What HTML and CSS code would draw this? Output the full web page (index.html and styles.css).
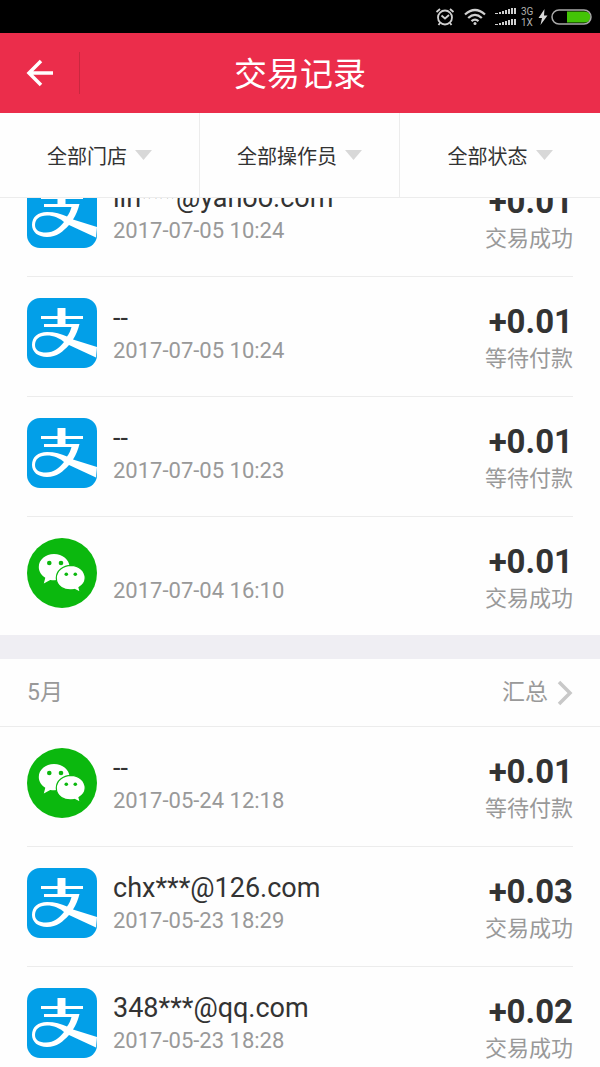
FILE: index.html
```
<!DOCTYPE html>
<html lang="zh-CN">
<head>
    <meta charset="UTF-8">
    <meta name="viewport" content="width=device-width, initial-scale=1.0">
    <title>交易记录</title>
    <link rel="stylesheet" href="styles.css">
</head>
<body>
    <!-- shared payment icons -->
    <svg class="sprite" aria-hidden="true">
        <symbol id="alipay" viewBox="0 0 70 70">
            <rect width="70" height="70" rx="13" fill="#029fe8"/>
            <path fill="#fff" d="M30.500 10H38.500V18H56V21H38.500V26H52.500C51 32 49 37 46 41.500L70 49L69 59.500L42 47C36 53.500 30 59 20 59C11 59 5 54 5 47C5 39 11 34 20 34C28 34 34 36 40 38.500C42 36 43.500 33 44.500 29H17V26H30.500V21H14V18H30.500Z"/>
            <path fill="#029fe8" d="M20 37.500C12 37.500 8 41.500 8 47C8 52 12 54.500 19 54.500C27 54.500 32 50 37 44C32 40 27 37.500 20 37.500Z"/>
        </symbol>
        <symbol id="wechat" viewBox="0 0 70 70">
            <circle cx="35" cy="35" r="35" fill="#0bb80e"/>
            <path fill="#fff" d="M27 16C18.500 16 11.800 21.600 11.800 29C11.800 33.500 14.500 37.300 18.300 39.700L16.800 45.500L23.200 42C35 44 42.500 37 42.500 29C42.500 21.600 35.500 16 27 16Z"/>
            <path fill="#fff" stroke="#0bb80e" stroke-width="1.200" d="M44 27.300C36 27.300 29.300 33 29.300 40C29.300 48 37 53.500 47.500 51.500L53.300 54.300L52 49.500C55.500 47.300 58.200 44 58.200 40C58.200 33 51.800 27.300 44 27.300Z"/>
            <g fill="#0bb80e">
                <circle cx="22.300" cy="25" r="2.300"/>
                <circle cx="34" cy="25" r="2.300"/>
                <circle cx="39.300" cy="36.300" r="1.800"/>
                <circle cx="48.300" cy="36.300" r="1.800"/>
            </g>
        </symbol>
    </svg>

    <div class="status-bar">
        <svg width="20" height="20" viewBox="0 0 20 20" fill="none" stroke="#d0d0d0" stroke-width="1.800">
            <circle cx="10" cy="10.500" r="7"/>
            <path d="M6.500 8.500L10 11.500L14 8M1.500 5L5 2M18.500 5L15 2M5 16L3.500 18M15 16L16.500 18"/>
        </svg>
        <svg class="wifi" width="22" height="18" viewBox="0 0 22 18" fill="none" stroke="#d0d0d0" stroke-width="2.300">
            <path d="M1 6.500Q11 -2.500 21 6.500M4.200 10Q11 3.800 17.800 10M7.500 13.200Q11 10 14.500 13.200"/>
            <circle cx="11" cy="15.500" r="1.500" fill="#d0d0d0" stroke="none"/>
        </svg>
        <svg class="signal" width="22" height="20" viewBox="0 0 22 20" fill="#d0d0d0">
            <path d="M0 6h3v1h-3zM4 5h2v2h-2zM7 4h2v3h-2zM10 3h2v4h-2zM13 2h2v5h-2zM16 1h2v6h-2zM19 1h2v6h-2z"/>
            <path d="M0 17h3v1h-3zM4 16h2v2h-2zM7 15h2v3h-2zM10 14h2v4h-2zM13 13h2v5h-2zM16 12h2v6h-2zM19 12h2v6h-2z"/>
        </svg>
        <div class="network">
            <span>3G</span>
            <span>1X</span>
        </div>
        <svg class="bolt" width="10" height="16" viewBox="0 0 10 16" fill="#d8d8d8">
            <path d="M6.500 0L0.500 9H4L2.500 16L9.500 6.500H6Z"/>
        </svg>
        <svg width="42" height="16" viewBox="0 0 42 16">
            <path fill="#43c406" d="M16 2.500H34a5.500 5.500 0 0 1 0 11H16Z"/>
            <rect x="1" y="1" width="39" height="14" rx="7" fill="none" stroke="#aaa" stroke-width="1.500"/>
        </svg>
    </div>

    <header class="header">
        <button class="back" type="button" aria-label="返回">
            <svg width="28" height="28" viewBox="0 0 28 28" fill="none" stroke="#fff" stroke-width="3.500">
                <path d="M15 2L3 14L15 26M3 14H27"/>
            </svg>
        </button>
        <h1 class="title">交易记录</h1>
    </header>

    <div class="filters">
        <label class="filter">
            <select aria-label="门店"><option>全部门店</option></select>
            <svg width="17" height="10" viewBox="0 0 17 10"><path d="M0 0H17L8.500 10Z" fill="#d8d8d8"/></svg>
        </label>
        <label class="filter">
            <select aria-label="操作员"><option>全部操作员</option></select>
            <svg width="17" height="10" viewBox="0 0 17 10"><path d="M0 0H17L8.500 10Z" fill="#d8d8d8"/></svg>
        </label>
        <label class="filter">
            <select aria-label="状态"><option>全部状态</option></select>
            <svg width="17" height="10" viewBox="0 0 17 10"><path d="M0 0H17L8.500 10Z" fill="#d8d8d8"/></svg>
        </label>
    </div>

    <main class="records">
        <ul class="list scrolled">
            <li class="record">
                <svg class="pay-icon"><use href="#alipay"/></svg>
                <div class="info">
                    <div class="account">lin***@yahoo.com</div>
                    <div class="time">2017-07-05 10:24</div>
                </div>
                <div class="result">
                    <div class="amount">+0.01</div>
                    <div class="state">交易成功</div>
                </div>
            </li>
            <li class="record">
                <svg class="pay-icon"><use href="#alipay"/></svg>
                <div class="info">
                    <div class="account">--</div>
                    <div class="time">2017-07-05 10:24</div>
                </div>
                <div class="result">
                    <div class="amount">+0.01</div>
                    <div class="state">等待付款</div>
                </div>
            </li>
            <li class="record">
                <svg class="pay-icon"><use href="#alipay"/></svg>
                <div class="info">
                    <div class="account">--</div>
                    <div class="time">2017-07-05 10:23</div>
                </div>
                <div class="result">
                    <div class="amount">+0.01</div>
                    <div class="state">等待付款</div>
                </div>
            </li>
            <li class="record">
                <svg class="pay-icon"><use href="#wechat"/></svg>
                <div class="info">
                    <div class="account"></div>
                    <div class="time">2017-07-04 16:10</div>
                </div>
                <div class="result">
                    <div class="amount">+0.01</div>
                    <div class="state">交易成功</div>
                </div>
            </li>
        </ul>

        <section class="month">
            <div class="month-header">
                <h2>5月</h2>
                <a href="#">汇总
                    <svg width="16" height="26" viewBox="0 0 16 26" fill="none" stroke="#c8c8c8" stroke-width="3.500">
                        <path d="M2 2L13 13L2 24"/>
                    </svg>
                </a>
            </div>
            <ul class="list">
                <li class="record">
                    <svg class="pay-icon"><use href="#wechat"/></svg>
                    <div class="info">
                        <div class="account">--</div>
                        <div class="time">2017-05-24 12:18</div>
                    </div>
                    <div class="result">
                        <div class="amount">+0.01</div>
                        <div class="state">等待付款</div>
                    </div>
                </li>
                <li class="record">
                    <svg class="pay-icon"><use href="#alipay"/></svg>
                    <div class="info">
                        <div class="account">chx***@126.com</div>
                        <div class="time">2017-05-23 18:29</div>
                    </div>
                    <div class="result">
                        <div class="amount">+0.03</div>
                        <div class="state">交易成功</div>
                    </div>
                </li>
                <li class="record">
                    <svg class="pay-icon"><use href="#alipay"/></svg>
                    <div class="info">
                        <div class="account">348***@qq.com</div>
                        <div class="time">2017-05-23 18:28</div>
                    </div>
                    <div class="result">
                        <div class="amount">+0.02</div>
                        <div class="state">交易成功</div>
                    </div>
                </li>
            </ul>
        </section>
    </main>
</body>
</html>
```
FILE: styles.css
```
* {
    box-sizing: border-box;
}

body {
    margin: 0;
    height: 100vh;
    display: flex;
    flex-direction: column;
    overflow: hidden;
    background: #fefefe;
    color: #333;
    font-family: Roboto, "Noto Sans CJK SC", sans-serif;
}

.sprite {
    display: none;
}

.status-bar {
    flex: none;
    height: 33px;
    padding-right: 7px;
    display: flex;
    align-items: center;
    justify-content: flex-end;
    background: #000;
}

.wifi {
    margin: 0 9px;
}

.network {
    width: 13px;
    margin: 0 4px;
    display: flex;
    flex-direction: column;
    color: #b0b0b0;
    font-size: 10px;
    line-height: 11px;
}

.bolt {
    margin-right: 3px;
}

.header {
    flex: none;
    height: 80px;
    display: grid;
    grid-template-columns: 80px 1fr 80px;
    align-items: center;
    background: #eb2d4b;
}

.back {
    height: 42px;
    padding: 0 0 0 26px;
    display: flex;
    align-items: center;
    border: 0;
    border-right: 1px solid #c9283f;
    background: none;
}

.title {
    margin: 0;
    padding-top: 4px;
    color: #fff;
    font-size: 33px;
    font-weight: 400;
    line-height: 40px;
    text-align: center;
}

.filters {
    flex: none;
    height: 85px;
    display: grid;
    grid-template-columns: repeat(3, 1fr);
    border-bottom: 1px solid #ececec;
}

.filter {
    display: flex;
    align-items: center;
    justify-content: center;
    gap: 8px;
    border-right: 1px solid #ececec;
}

.filter:last-child {
    border-right: 0;
}

.filter select {
    appearance: none;
    padding: 4px 0 0;
    border: 0;
    background: none;
    color: #333;
    font-family: inherit;
    font-size: 20px;
}

.records {
    flex: 1;
    min-height: 0;
    overflow: hidden;
}

.list {
    margin: 0;
    padding: 0 27px;
    list-style: none;
}

/* list is scrolled up under the filters */
.scrolled {
    margin-top: -41px;
}

.record {
    display: flex;
    padding: 21px 0 20px;
    border-bottom: 1px solid #ececec;
}

.record:last-child {
    padding-bottom: 19px;
    border-bottom: 0;
}

.pay-icon {
    flex: none;
    width: 70px;
    height: 70px;
    margin-right: 16px;
}

.info {
    flex: 1;
    min-width: 0;
    padding-top: 4px;
}

.account {
    height: 32px;
    font-size: 27px;
    line-height: 32px;
}

.time {
    color: #999;
    font-size: 22px;
    line-height: 34px;
}

.result {
    padding-top: 4px;
    text-align: right;
}

.amount {
    font-size: 33px;
    font-weight: 700;
    line-height: 40px;
}

.state {
    color: #999;
    font-size: 22px;
    line-height: 34px;
}

.month {
    border-top: 24px solid #efeef3;
}

.month-header {
    height: 68px;
    padding: 0 27px;
    display: flex;
    align-items: center;
    justify-content: space-between;
    border-bottom: 1px solid #ececec;
    color: #999;
}

.month-header h2 {
    margin: 0;
    font-size: 23px;
    font-weight: 400;
    line-height: 32px;
}

.month-header a {
    display: flex;
    align-items: center;
    gap: 9px;
    color: inherit;
    font-size: 23px;
    line-height: 32px;
    text-decoration: none;
}
```
